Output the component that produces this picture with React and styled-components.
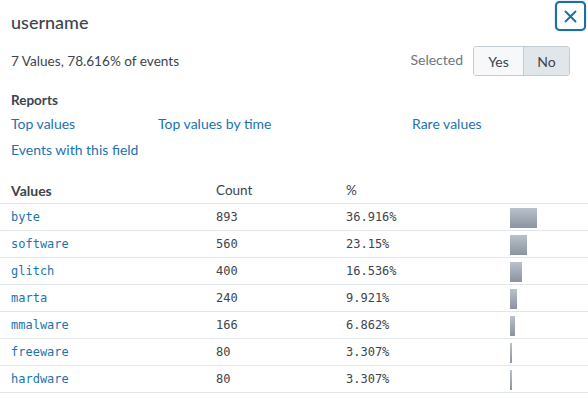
import React from "react";
import styled, { createGlobalStyle } from "styled-components";

const Global = createGlobalStyle`
  html, body { margin: 0; padding: 0; background: #fff; }
  body { font-family: Lato, "Open Sans", sans-serif; color: #3c444d; }
  * { box-sizing: border-box; }
`;

const Panel = styled.div`
  width: 588px;
  height: 398px;
  overflow: hidden;
  background: #fff;
`;

const Header = styled.div`
  display: flex;
  justify-content: space-between;
  align-items: flex-start;
  height: 46px;
  padding: 1px 2px 0 11px;
`;

const Title = styled.h2`
  margin: 0;
  padding-top: 9px;
  font-size: 18px;
  line-height: 24px;
  font-weight: 500;
  color: #3c444d;
`;

const CloseButton = styled.button`
  width: 31px;
  height: 30px;
  border: 2px solid #1a6fa8;
  border-radius: 5px;
  background: #fff;
  display: flex;
  align-items: center;
  justify-content: center;
  padding: 0;
  color: #1a6fa8;
  box-shadow: 0 0 1px #1a6fa8;
`;

const Summary = styled.div`
  display: flex;
  justify-content: space-between;
  align-items: center;
  height: 30px;
  padding: 0 18px 0 11px;
`;

const SummaryText = styled.span`
  font-size: 13.6px;
  color: #3c444d;
  margin-top: -1px;
`;

const SelectedGroup = styled.div`
  display: flex;
  align-items: center;
  gap: 10px;
`;

const SelectedLabel = styled.span`
  font-size: 14px;
  color: #6b7785;
  margin-top: -4px;
`;

const Toggle = styled.div`
  display: flex;
  height: 30px;
  border: 1px solid #c3cbd4;
  border-radius: 3px;
  overflow: hidden;
`;

const ToggleOption = styled.button`
  width: ${(p) => p.$w}px;
  height: 100%;
  border: none;
  border-left: ${(p) => (p.$first ? "none" : "1px solid #c3cbd4")};
  background: ${(p) => (p.$active ? "#e1e6eb" : "#f7f8fa")};
  color: #3c444d;
  font-family: Lato, "Open Sans", sans-serif;
  font-size: 14px;
  padding: 0;
`;

const Section = styled.div`
  padding: 15px 11px 0;
`;

const SectionTitle = styled.div`
  font-size: 13.5px;
  font-weight: 700;
  line-height: 18px;
  color: #3c444d;
`;

const LinkGrid = styled.div`
  display: grid;
  grid-template-columns: 147px 254px 1fr;
  grid-auto-rows: 26px;
  padding-top: 5px;
`;

const Link = styled.a`
  font-size: 14px;
  line-height: 20px;
  color: #1b73b1;
  text-decoration: none;
  white-space: nowrap;
`;

const Table = styled.div`
  margin-top: 11px;
`;

const Row = styled.div`
  display: grid;
  grid-template-columns: 205px 130px 164px 1fr;
  align-items: center;
  height: 27px;
  padding-left: 11px;
  border-bottom: 1px solid #e1e6eb;
`;

const HeadCell = styled.div`
  font-size: ${(p) => (p.$bold ? 14 : 13.5)}px;
  font-weight: ${(p) => (p.$bold ? 700 : 400)};
  color: #3c444d;
`;

const MonoCell = styled.div`
  font-family: "DejaVu Sans Mono", monospace;
  font-size: 12px;
  color: ${(p) => (p.$link ? "#1b73b1" : "#3c444d")};
`;

const Bar = styled.div`
  height: 20px;
  margin-top: 1px;
  background: linear-gradient(#bac1cb, #8a939f);
`;

const rows = [
  ["byte", 893, "36.916%", 36.916],
  ["software", 560, "23.15%", 23.15],
  ["glitch", 400, "16.536%", 16.536],
  ["marta", 240, "9.921%", 9.921],
  ["mmalware", 166, "6.862%", 6.862],
  ["freeware", 80, "3.307%", 3.307],
  ["hardware", 80, "3.307%", 3.307],
];

export default function App() {
  return (
    <Panel>
      <Global />
      <Header>
        <Title>username</Title>
        <CloseButton aria-label="Close">
          <svg width="13" height="13" viewBox="0 0 13 13">
            <path d="M1.5 1.5 L11.5 11.5 M11.5 1.5 L1.5 11.5" stroke="#1a6fa8" strokeWidth="1.9" strokeLinecap="round" fill="none" />
          </svg>
        </CloseButton>
      </Header>
      <Summary>
        <SummaryText>7 Values, 78.616% of events</SummaryText>
        <SelectedGroup>
          <SelectedLabel>Selected</SelectedLabel>
          <Toggle>
            <ToggleOption $first $w={49}>Yes</ToggleOption>
            <ToggleOption $active $w={46}>No</ToggleOption>
          </Toggle>
        </SelectedGroup>
      </Summary>
      <Section>
        <SectionTitle>Reports</SectionTitle>
        <LinkGrid>
          <Link href="#">Top values</Link>
          <Link href="#">Top values by time</Link>
          <Link href="#">Rare values</Link>
          <Link href="#">Events with this field</Link>
        </LinkGrid>
      </Section>
      <Table>
        <Row>
          <HeadCell $bold>Values</HeadCell>
          <HeadCell>Count</HeadCell>
          <HeadCell>%</HeadCell>
          <div />
        </Row>
        {rows.map(([name, count, pct, v]) => (
          <Row key={name}>
            <MonoCell $link>{name}</MonoCell>
            <MonoCell>{count}</MonoCell>
            <MonoCell>{pct}</MonoCell>
            <div>
              <Bar style={{ width: `${Math.max(2, Math.round(v * 0.73))}px` }} />
            </div>
          </Row>
        ))}
      </Table>
    </Panel>
  );
}
